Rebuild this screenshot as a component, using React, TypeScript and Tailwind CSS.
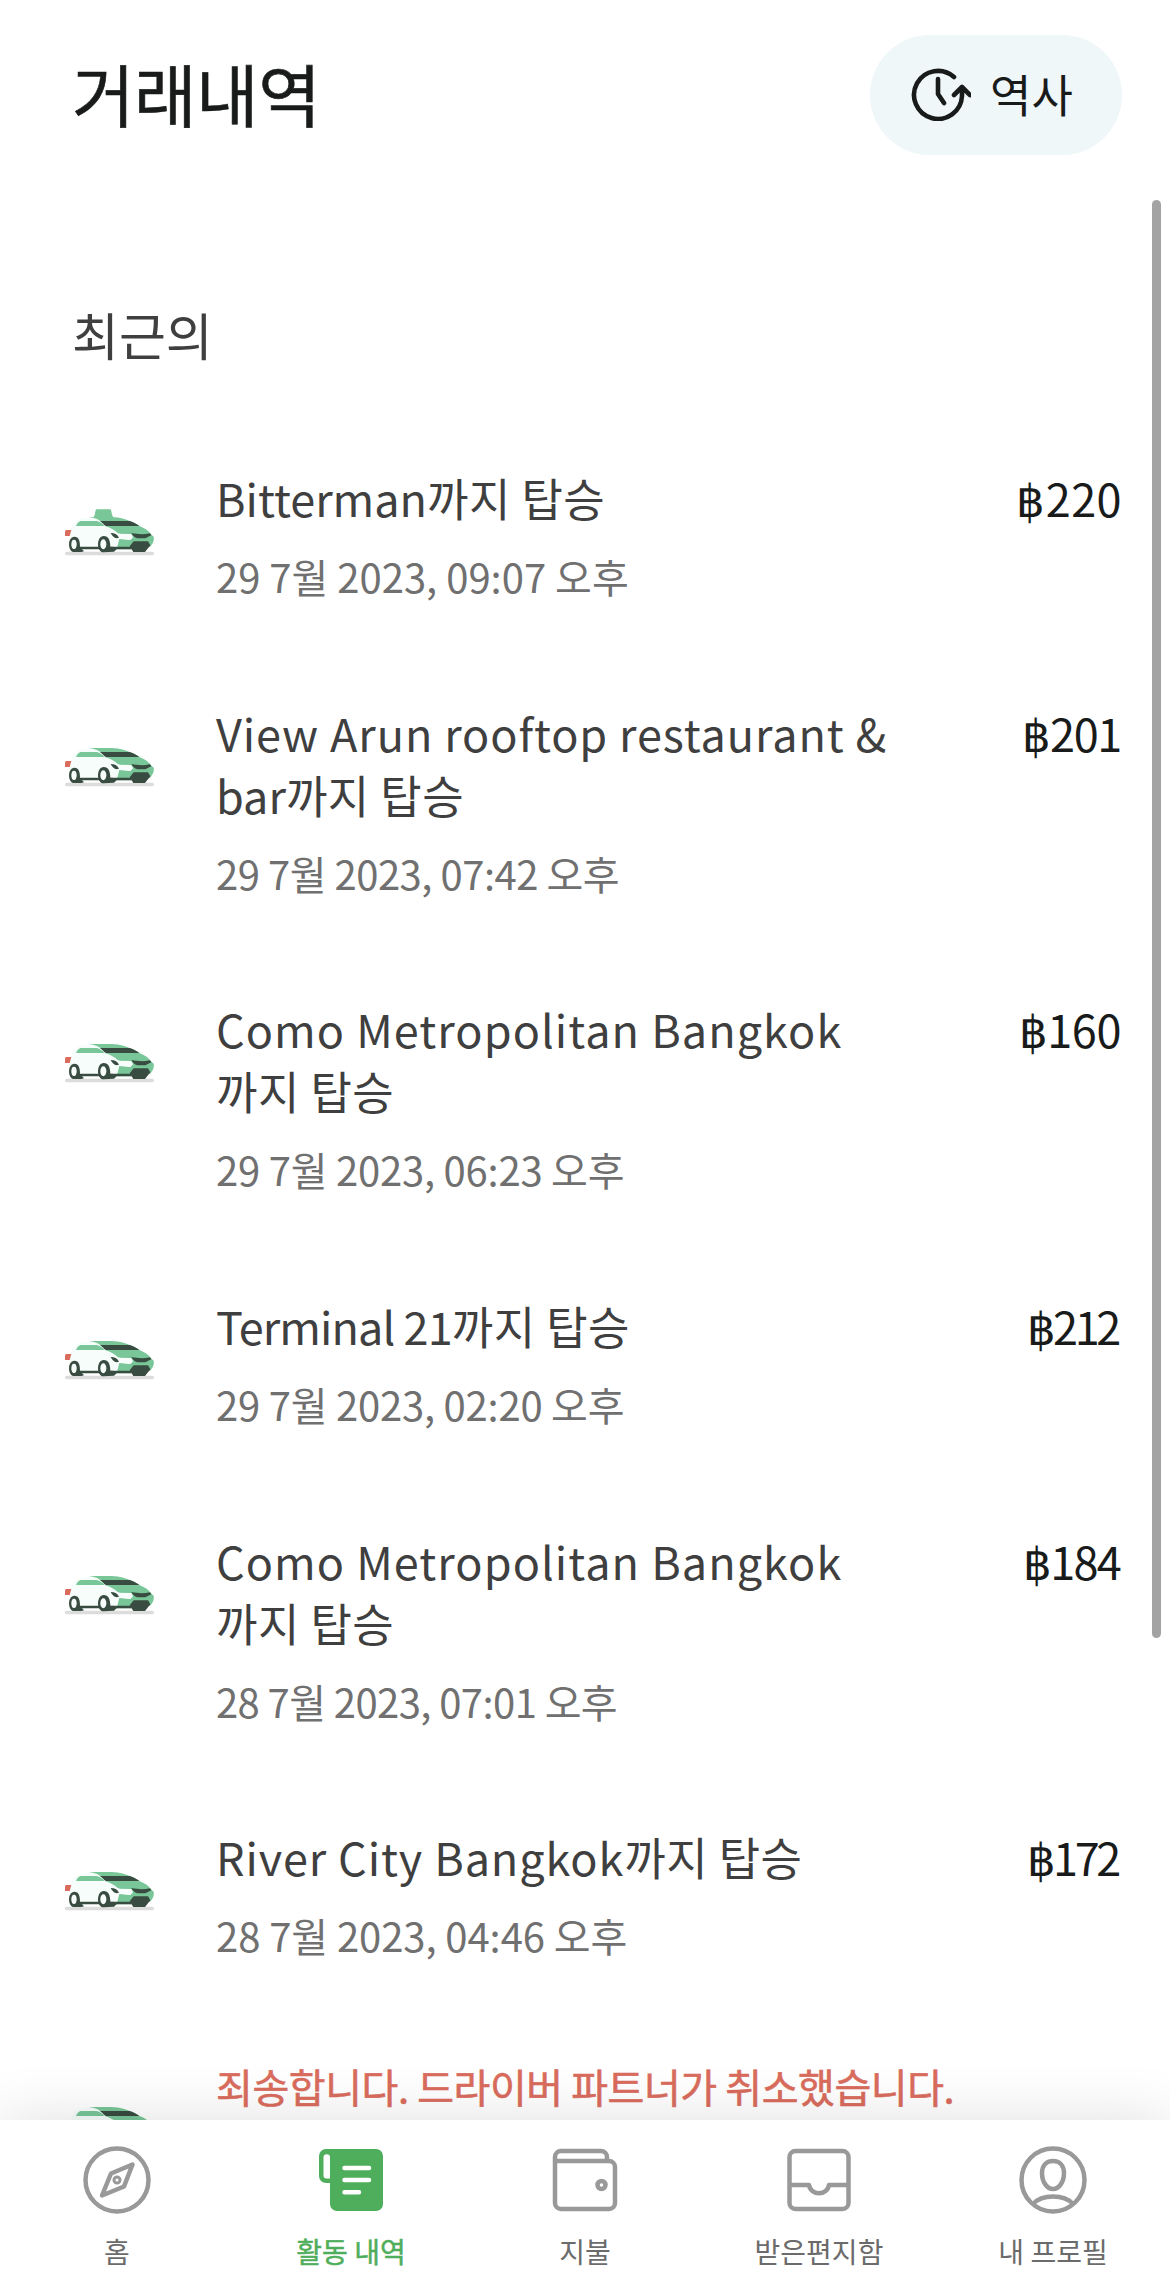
import React from "react";

type Trip = {
  place: string;
  placeClass: string;
  lastLine?: string;
  date: string;
  dateClass: string;
  price: string;
  priceClass: string;
  taxi?: boolean;
};

const trips: Trip[] = [
  {
    place: "Bitterman",
    placeClass: "tracking-normal",
    date: "29 7월 2023, 09:07 오후",
    dateClass: "tracking-normal",
    price: "220",
    priceClass: "tracking-[0.4px]",
    taxi: true,
  },
  {
    place: "View Arun rooftop restaurant &",
    placeClass: "tracking-[0.9px]",
    lastLine: "bar",
    date: "29 7월 2023, 07:42 오후",
    dateClass: "tracking-[-0.48px]",
    price: "201",
    priceClass: "tracking-[-1.3px] pr-[1px]",
  },
  {
    place: "Como Metropolitan Bangkok",
    placeClass: "tracking-[1.05px]",
    lastLine: "",
    date: "29 7월 2023, 06:23 오후",
    dateClass: "tracking-[-0.22px]",
    price: "160",
    priceClass: "tracking-[-0.4px] pr-[1px]",
  },
  {
    place: "Terminal 21",
    placeClass: "tracking-[-0.9px]",
    date: "29 7월 2023, 02:20 오후",
    dateClass: "tracking-[-0.22px]",
    price: "212",
    priceClass: "tracking-[-3.3px] pr-[4px]",
  },
  {
    place: "Como Metropolitan Bangkok",
    placeClass: "tracking-[1.05px]",
    lastLine: "",
    date: "28 7월 2023, 07:01 오후",
    dateClass: "tracking-[-0.58px]",
    price: "184",
    priceClass: "tracking-[-1.7px] pr-[2px]",
  },
  {
    place: "River City Bangkok",
    placeClass: "tracking-[0.9px]",
    date: "28 7월 2023, 04:46 오후",
    dateClass: "tracking-[-0.07px]",
    price: "172",
    priceClass: "tracking-[-3.3px] pr-[4px]",
  },
];

function CarIcon({ taxi }: { taxi?: boolean }) {
  return (
    <svg className="h-[47px] w-[90px]" viewBox="45 45 270 141" fill="none">
      <rect x="45" y="173" width="267" height="11" rx="5.5" fill="#dcdcdc" />
      {taxi && <path d="M131 69c5-3 4-22 8-23h42c4 1 3 17 9 23Z" fill="#79c698" />}
      {/* body */}
      <path d="M60 121c3-26 12-44 33-47 18-4 34-5 50-4l68 48 38 12-20 34H84l-28-12Z" fill="#f7fdfa" />
      <path d="M78 96c3-8 7-13 14-15h48c10 3 18 8 23 15Z" fill="#79c698" />
      <path d="M117 69h58c28 0 45 4 64 12 12 4 20 9 29 15 16 6 28 14 35 25l8 7c2 13-3 21-11 30l-50 8h-50l8-31 30 3 10-7-44-13c-10-10-22-16-37-21-10-13-25-26-50-28Z" fill="#79c698" />
      <path d="M150 81h89c12 3 21 9 29 15H168c-7-4-11-10-18-15Z" fill="#394c41" />
      {/* headlights and grille */}
      <path d="m202 119 42 1 5 10-8 8-33-6Z" fill="#f7fdfa" />
      <path d="M182 117c12 0 20 4 25 14l-7 2c-8-2-12-5-18-16Z" fill="#394c41" />
      <path d="M244 117c20 4 36 5 56 1l4 6-18 9h-24c-9-3-14-8-18-16Z" fill="#394c41" />
      <path d="M251 142h43l7 12-16 20h-35l-11-17Z" fill="#394c41" />
      <path d="M84 158h160v8H84Z" fill="#394c41" />
      <path d="M47 108h17l-5 18H45V114Z" fill="#d96c5d" />
      {/* wheels */}
      <path d="M73 128c14 0 17 13 17 31l12 13-8 2H73c-21 0-21-46 0-46Z" fill="#394c41" />
      <ellipse cx="72" cy="151" rx="8" ry="14" fill="#f7fdfa" />
      <path d="M161 126c15 0 20 14 20 32l25 2-14 13-31 2c-23 0-22-49 0-49Z" fill="#394c41" />
      <ellipse cx="160" cy="151" rx="9" ry="15" fill="#f7fdfa" />
    </svg>
  );
}

function HistoryIcon() {
  return (
    <svg className="-mt-[2px] h-[54px] w-[60px]" viewBox="0 0 60 54" fill="none" stroke="#191b1b" strokeWidth="4.6" strokeLinecap="round" strokeLinejoin="round">
      <path d="M43 10A24 24 0 1 0 51 29V21M43 28l8-8 8 8M27 12v15l6 9" />
    </svg>
  );
}

function TripRow({ trip }: { trip: Trip }) {
  return (
    <li className="flex pb-[94.7px]">
      <div className={`w-[151px] shrink-0 ${trip.taxi ? "pt-[42px]" : "pt-[38px]"}`}>
        <CarIcon taxi={trip.taxi} />
      </div>
      <div className="min-w-0 flex-1 whitespace-nowrap">
        <h3 className="text-[45px] leading-[62px] text-[#3f3f3f]">
          <span className={trip.placeClass}>{trip.place}</span>
          {trip.lastLine !== undefined && <br />}
          {trip.lastLine}
          <span className="tracking-[0.5px]">까지 탑승</span>
        </h3>
        <p className={`mt-[17px] text-[40px] leading-[61px] text-[#707070] ${trip.dateClass}`}>{trip.date}</p>
      </div>
      <div className={`text-[45px] leading-[62px] text-[#191b1b] ${trip.priceClass}`}>฿{trip.price}</div>
    </li>
  );
}

function CompassIcon() {
  return (
    <svg className="size-[72px]" viewBox="0 0 72 72" fill="none" stroke="#999" strokeWidth="4.5" strokeLinejoin="round">
      <circle cx="36" cy="36" r="31.5" />
      <path d="m30 29.500 21.500-9-8.500 22-22 9Z" />
      <circle cx="36" cy="36" r="3" strokeWidth="3" />
    </svg>
  );
}

function ActivityIcon() {
  return (
    <svg className="size-[72px]" viewBox="0 0 72 72" fill="none">
      <path d="M11 5h50a7 7 0 0 1 7 7v48a7 7 0 0 1-7 7H22a7 7 0 0 1-7-7V39h-4a7 7 0 0 1-7-7V12a7 7 0 0 1 7-7Z" fill="#4fae5b" />
      <path d="M15 34.500h-3.500a3 3 0 0 1-3-3v-18a3.250 3.250 0 0 1 6.500 0Z" fill="#fff" />
      <path d="M29.500 24h24.500M29.500 36h24.500M29.500 48.300h14.500" stroke="#fff" strokeWidth="4.500" strokeLinecap="round" />
    </svg>
  );
}

function WalletIcon() {
  return (
    <svg className="size-[72px]" viewBox="0 0 72 72" fill="none" stroke="#999" strokeWidth="4.500">
      <path d="M6 17v42a6 6 0 0 0 6 6h48a6 6 0 0 0 6-6V23a6 6 0 0 0-6-6H6v-4a6 6 0 0 1 6-6h40a6 6 0 0 1 6 6v4" />
      <circle cx="52.500" cy="41" r="4" />
    </svg>
  );
}

function InboxIcon() {
  return (
    <svg className="size-[72px]" viewBox="0 0 72 72" fill="none" stroke="#999" strokeWidth="4.500" strokeLinejoin="round">
      <rect x="6.500" y="7" width="59" height="58" rx="6" />
      <path d="M7 41h19c2 11 18 11 20 0h19" />
    </svg>
  );
}

function ProfileIcon() {
  return (
    <svg className="size-[72px]" viewBox="0 0 72 72" fill="none" stroke="#999" strokeWidth="4.500">
      <circle cx="36" cy="36" r="31.500" />
      <path d="M36 17c-7 0-11 5-11 12 0 9 5 16 11 16s11-7 11-16c0-7-4-12-11-12ZM16 60c9-10 31-10 40 0" />
    </svg>
  );
}

const tabs = [
  { label: "홈", icon: CompassIcon },
  { label: "활동 내역", icon: ActivityIcon, active: true },
  { label: "지불", icon: WalletIcon },
  { label: "받은편지함", icon: InboxIcon },
  { label: "내 프로필", icon: ProfileIcon },
];

export default function App() {
  return (
    <div className="relative flex h-[2282px] w-[1170px] flex-col overflow-hidden bg-white font-['Noto_Sans_CJK_KR','Noto_Sans',sans-serif]">
      <header className="flex h-[155px] items-start justify-between pt-[35px] pr-[48px] pl-[72px]">
        <h1 className="pt-[8px] text-[68px] leading-[100px] tracking-[-0.5px] text-[#191b1b] [-webkit-text-stroke:0.6px_#191b1b]">거래내역</h1>
        <button className="flex h-[120px] w-[252px] items-center gap-[19px] rounded-full bg-[#eff7f9] pl-[41px] text-[45px] text-[#191b1b]">
          <HistoryIcon />
          <span className="-mt-[3px]">역사</span>
        </button>
      </header>

      <main className="min-h-0 flex-1 overflow-hidden pr-[48px] pl-[65px]">
        <h2 className="mt-[144px] pl-[7px] text-[51px] leading-[70px] text-[#3f3f3f]">최근의</h2>
        <ul className="mt-[98px]">
          {trips.map((trip) => (
            <TripRow key={trip.date} trip={trip} />
          ))}
          <li className="flex">
            <div className="w-[151px] shrink-0 pt-[38px]">
              <CarIcon />
            </div>
            <p className="text-[40px] leading-[50px] tracking-[-0.42px] whitespace-nowrap text-[#d96c5d] [-webkit-text-stroke:0.6px_#d96c5d]">
              죄송합니다. 드라이버 파트너가 취소했습니다.
            </p>
          </li>
        </ul>
      </main>

      <nav className="relative grid h-[162px] shrink-0 grid-cols-5 bg-white shadow-[0_0_60px_rgba(0,0,0,0.13)]">
        {tabs.map(({ label, icon: Icon, active }) => (
          <div
            key={label}
            className={`flex flex-col items-center pt-[24px] text-[28px] leading-[40px] ${active ? "text-[#4fae5b] [-webkit-text-stroke:0.5px_#4fae5b]" : "text-[#6b6b6b]"}`}
          >
            <Icon />
            <span className="mt-[15px]">{label}</span>
          </div>
        ))}
      </nav>

      <div className="absolute top-[200px] right-[9px] h-[1438px] w-[9px] rounded-full bg-[#a3a3a3]" />
    </div>
  );
}
